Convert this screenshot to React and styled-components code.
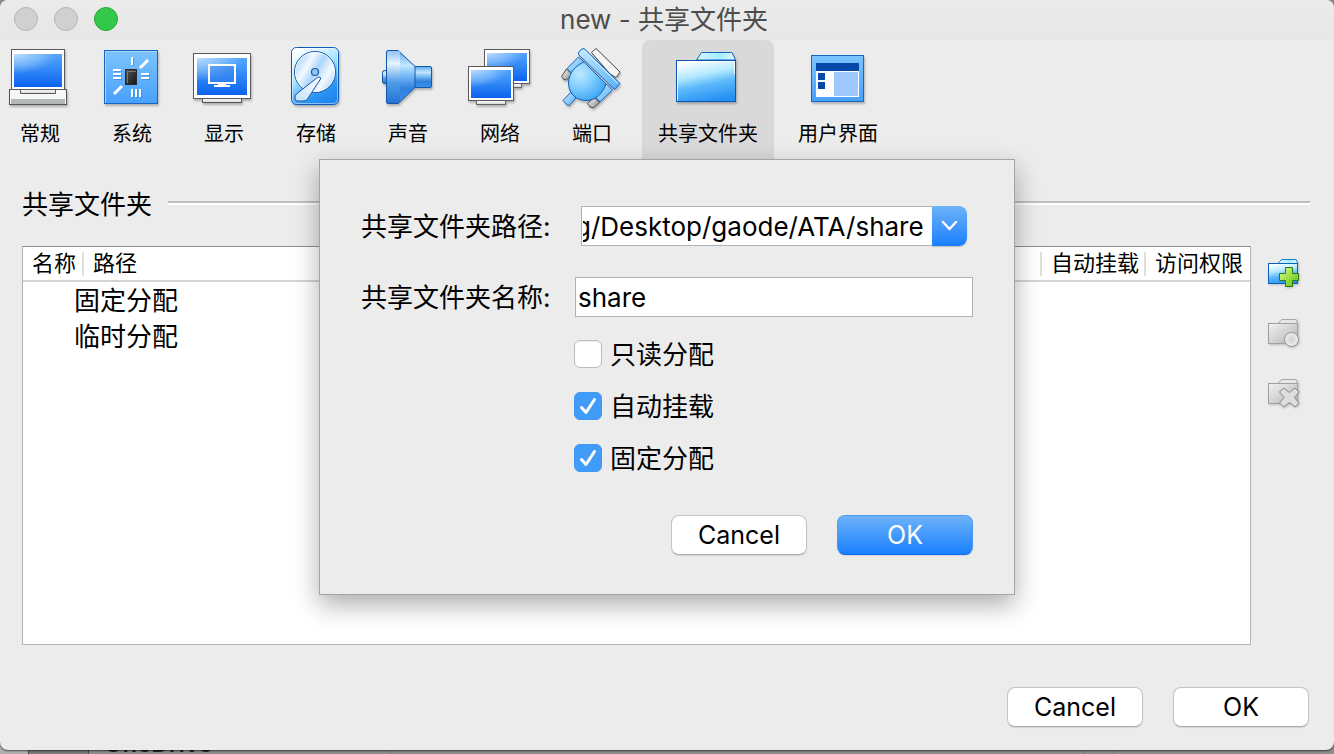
import React, { useEffect, useRef, useState } from "react";
import styled, { createGlobalStyle, css } from "styled-components";

const GlobalStyle = createGlobalStyle`
  *, *::before, *::after { box-sizing: border-box; }
  body {
    margin: 0;
    background: #8d8b8b;
    color: #000;
    font-family: Inter, "Noto Sans CJK SC", sans-serif;
  }
  button, input { font-family: inherit; color: inherit; }
`;

/* ---------- shell ---------- */

const Desktop = styled.div`
  position: relative;
  display: flex;
  flex-direction: column;
  min-height: 100vh;
  padding-bottom: 4px;
  overflow: hidden;
`;

const BackWindow = styled.div`
  position: absolute;
  left: 0;
  right: 0;
  bottom: 0;
  height: 24px;
  display: grid;
  grid-template-columns: 29px 60px 302px 694px 29px 1fr;
  background: #8f8d8d;
`;

const BackCell = styled.div`
  padding-left: 15px;
  border-right: 1px solid ${(p) => (p.$edge ? "#4b4949" : "#7e7c7c")};
  background: ${(p) => p.$fill || "transparent"};
  color: #222;
  font-size: 24px;
  font-weight: 600;
  line-height: 28px;
`;

const Window = styled.main`
  position: relative;
  flex: 1;
  display: flex;
  flex-direction: column;
  background: #ececec;
  border-radius: 8px;
  box-shadow: 0 1px 2px rgba(0, 0, 0, 0.6);
`;

const TitleBar = styled.header`
  display: grid;
  grid-template-columns: 1fr auto 1fr;
  align-items: center;
  height: 40px;
  padding: 0 20px 4px 14px;
  background: linear-gradient(#ebebeb, #e7e7e7);
  border-radius: 8px 8px 0 0;
`;

const Lights = styled.div`
  display: flex;
  gap: 16px;
`;

const Light = styled.button`
  width: 24px;
  height: 24px;
  padding: 0;
  border: 1px solid ${(p) => (p.$on ? "#2aa836" : "#b5b5b5")};
  border-radius: 50%;
  background: ${(p) => (p.$on ? "#34c84a" : "#d0d0d0")};
`;

const Title = styled.h1`
  margin: 0;
  padding-top: 2px;
  font-size: 26px;
  line-height: 36px;
  font-weight: 400;
  color: #4d4d4d;
`;

/* ---------- toolbar ---------- */

const Toolbar = styled.nav`
  display: flex;
  gap: 8px;
  margin-left: -2px;
`;

const Tab = styled.button`
  display: flex;
  flex-direction: column;
  align-items: center;
  gap: 14px;
  min-width: 84px;
  padding: 4px 16px 13px;
  border: 0;
  border-radius: 8px 8px 0 0;
  background: ${(p) => (p.$active ? "#d9d9d9" : "transparent")};
  font-size: 20px;
  line-height: 24px;
  white-space: nowrap;

  svg {
    display: block;
    overflow: visible;
    margin: 0 -8px;
    filter: drop-shadow(1px 2px 1px rgba(0, 0, 0, 0.25));
  }
`;

/* ---------- content ---------- */

const Content = styled.section`
  flex: 1;
  display: flex;
  flex-direction: column;
  gap: 25px;
  padding: 30px 24px 0 22px;
`;

const SectionHead = styled.div`
  display: flex;
  align-items: center;
  gap: 16px;
`;

const SectionTitle = styled.h2`
  margin: 0;
  font-size: 26px;
  line-height: 32px;
  font-weight: 400;
`;

const Rule = styled.hr`
  flex: 1;
  height: 4px;
  margin: 0 0 4px;
  border: 0;
  border-top: 2px solid #bfbfbf;
  background: #fff;
`;

const Body = styled.div`
  flex: 1;
  display: flex;
  gap: 16px;
`;

const ListBox = styled.div`
  flex: 1;
  background: #fff;
  border: 1px solid #b4b4b4;
  border-top-color: #8e8e8e;
`;

const FolderTable = styled.table`
  width: 100%;
  border-collapse: separate;
  border-spacing: 0;
  table-layout: fixed;
`;

const HeadCell = styled.th`
  position: relative;
  width: ${(p) => p.$width || "auto"};
  height: 35px;
  padding: 0 0 2px 9px;
  border-bottom: 2px solid #d4d4d4;
  font-size: 22px;
  line-height: 30px;
  font-weight: 400;
  text-align: left;
  white-space: nowrap;

  &:not(:last-child)::after {
    content: "";
    position: absolute;
    top: 5px;
    right: 0;
    width: 2px;
    height: 24px;
    background: #dedede;
  }
`;

const GroupCell = styled.td`
  height: 36px;
  padding: 2px 0 0 51px;
  font-size: 26px;
  line-height: 34px;
`;

const SideBar = styled.div`
  display: flex;
  flex-direction: column;
  gap: 28px;
  width: 43px;
  padding-top: 11px;
`;

const IconButton = styled.button`
  height: 32px;
  padding: 0;
  border: 0;
  background: none;
  text-align: left;

  svg {
    display: block;
    overflow: visible;
    filter: drop-shadow(1px 1px 1px rgba(0, 0, 0, 0.2));
  }
`;

const Actions = styled.div`
  display: flex;
  justify-content: flex-end;
  gap: 30px;
`;

const Footer = styled.footer`
  padding: 42px 25px 23px;
`;

const PushButton = styled.button`
  width: 136px;
  height: 40px;
  padding: 0;
  border: 1px solid #c4c4c4;
  border-bottom-color: #adadad;
  border-radius: 8px;
  background: #fff;
  box-shadow: 0 1px 1px rgba(0, 0, 0, 0.1);
  font-size: 25px;
  line-height: 36px;

  ${(p) =>
    p.$primary &&
    css`
      color: #fff;
      border-color: #4a9cf0;
      border-bottom-color: #0f6cf0;
      background: linear-gradient(#6db3f8, #1a7fff);
    `}
`;

/* ---------- sheet ---------- */

const SheetLayer = styled.div`
  position: absolute;
  inset: 0;
  display: flex;
  justify-content: center;
  align-items: flex-start;
  padding: 159px 16px 0;
`;

const Sheet = styled.form`
  width: 696px;
  max-width: 100%;
  padding: 46px 41px 39px;
  border: 1px solid #a4a4a4;
  background: #ececec;
  box-shadow: 0 10px 24px rgba(0, 0, 0, 0.32);
`;

const Fields = styled.div`
  display: grid;
  grid-template-columns: 190px 1fr;
  column-gap: 24px;
  row-gap: 31px;
  align-items: center;
`;

const FieldLabel = styled.label`
  padding-top: 2px;
  font-size: 26px;
  line-height: 38px;
  white-space: nowrap;
`;

const Combo = styled.div`
  display: flex;
  height: 40px;
  margin: 0 6px;
`;

const TextInput = styled.input`
  flex: 1;
  min-width: 0;
  width: 100%;
  height: 40px;
  padding: 0 2px;
  border: 1px solid #b2b2b2;
  border-radius: 0;
  outline: 0;
  background: #fff;
  font-size: 26px;
`;

const ComboInput = styled(TextInput)`
  padding: 0 8px 0 1px;
  border-right: 0;
`;

const ComboButton = styled.button`
  display: grid;
  place-items: center;
  width: 35px;
  padding: 0;
  border: 0;
  border-radius: 0 8px 8px 0;
  background: linear-gradient(#6db3f8, #1a7fff);
  box-shadow: 0 1px 1px rgba(0, 0, 0, 0.2);
`;

const Checks = styled.div`
  display: flex;
  flex-direction: column;
  gap: 24px;
  padding: 23px 0 43px 213px;
`;

const CheckLabel = styled.label`
  display: flex;
  align-items: center;
  gap: 8px;
  height: 28px;
  font-size: 26px;
  line-height: 28px;
`;

const CheckText = styled.span`
  padding-top: 2px;
`;

const CheckBox = styled.input`
  appearance: none;
  width: 28px;
  height: 28px;
  margin: 0;
  border: 1px solid #bcbcbc;
  border-radius: 6px;
  background: #fff;
  box-shadow: inset 0 1px 1px rgba(0, 0, 0, 0.08);

  &:checked {
    border-color: #3f97f6;
    background: #419bf9;
    box-shadow: none;
  }
`;

const CheckHolder = styled.span`
  display: grid;

  > * { grid-area: 1 / 1; }
  svg { pointer-events: none; }
`;

/* ---------- drawings ---------- */

const Art = ({ children }) => (
  <svg width="64" height="64" viewBox="0 0 64 64" aria-hidden="true">
    {children}
  </svg>
);

const HiddenSvg = styled.svg`
  position: absolute;
`;

const Defs = () => (
  <HiddenSvg width="0" height="0" aria-hidden="true">
    <defs>
      <linearGradient id="screen" x1="0" y1="0" x2="0" y2="1">
        <stop offset="0" stopColor="#55a6fb" />
        <stop offset="0.5" stopColor="#2f86f6" />
        <stop offset="1" stopColor="#0b62ee" />
      </linearGradient>
      <radialGradient id="gloss" cx="0.05" cy="0" r="0.85">
        <stop offset="0" stopColor="#fff" stopOpacity="0.6" />
        <stop offset="0.6" stopColor="#d9efff" stopOpacity="0.32" />
        <stop offset="1" stopColor="#bfe3ff" stopOpacity="0" />
      </radialGradient>
      <linearGradient id="tile" x1="0" y1="0" x2="0" y2="1">
        <stop offset="0" stopColor="#7dc4ff" />
        <stop offset="1" stopColor="#47a0fc" />
      </linearGradient>
      <linearGradient id="metal" x1="0" y1="0" x2="0" y2="1">
        <stop offset="0" stopColor="#fff" />
        <stop offset="1" stopColor="#d2d4d4" />
      </linearGradient>
      <linearGradient id="grip" x1="0" y1="0" x2="1" y2="1">
        <stop offset="0" stopColor="#f4f4f4" />
        <stop offset="1" stopColor="#8e8e8e" />
      </linearGradient>
      <linearGradient id="chip" x1="0" y1="0" x2="1" y2="1">
        <stop offset="0" stopColor="#555" />
        <stop offset="1" stopColor="#161616" />
      </linearGradient>
      <linearGradient id="drive" x1="0.2" y1="0" x2="0.7" y2="1">
        <stop offset="0" stopColor="#fff" />
        <stop offset="0.45" stopColor="#a5e4ff" />
        <stop offset="0.8" stopColor="#2b94f3" />
        <stop offset="1" stopColor="#1f86ee" />
      </linearGradient>
      <linearGradient id="disc" x1="0" y1="0.2" x2="1" y2="0.8">
        <stop offset="0" stopColor="#9fd0fb" />
        <stop offset="0.3" stopColor="#f2f9ff" />
        <stop offset="0.5" stopColor="#a9d5fc" />
        <stop offset="0.75" stopColor="#f4faff" />
        <stop offset="1" stopColor="#a4cffb" />
      </linearGradient>
      <linearGradient id="arm" x1="1" y1="0" x2="0" y2="1">
        <stop offset="0" stopColor="#fff" />
        <stop offset="1" stopColor="#c3dffb" />
      </linearGradient>
      <linearGradient id="cone" x1="0" y1="0" x2="0" y2="1">
        <stop offset="0" stopColor="#5aa9ee" />
        <stop offset="0.28" stopColor="#c4e7ff" />
        <stop offset="0.45" stopColor="#7fc0f7" />
        <stop offset="0.72" stopColor="#2f80dd" />
        <stop offset="1" stopColor="#3d93ee" />
      </linearGradient>
      <linearGradient id="plate" x1="0" y1="0" x2="0" y2="1">
        <stop offset="0" stopColor="#8cc2f5" />
        <stop offset="0.25" stopColor="#e6f4ff" />
        <stop offset="0.6" stopColor="#4f9ce8" />
        <stop offset="1" stopColor="#2673d2" />
      </linearGradient>
      <radialGradient id="plug" cx="0.3" cy="0.3" r="0.8">
        <stop offset="0" stopColor="#bfe8ff" />
        <stop offset="0.5" stopColor="#7ccbff" />
        <stop offset="1" stopColor="#36a1f5" />
      </radialGradient>
      <linearGradient id="pipe" x1="0" y1="0" x2="1" y2="1">
        <stop offset="0" stopColor="#c5e9ff" />
        <stop offset="1" stopColor="#55b1f8" />
      </linearGradient>
      <linearGradient id="folder" x1="0.3" y1="0" x2="0.6" y2="1">
        <stop offset="0" stopColor="#fff" />
        <stop offset="0.35" stopColor="#b5e9ff" />
        <stop offset="0.6" stopColor="#5cb9fb" />
        <stop offset="1" stopColor="#2590f3" />
      </linearGradient>
      <linearGradient id="flap" x1="0" y1="0" x2="1" y2="0">
        <stop offset="0" stopColor="#d9f7ff" />
        <stop offset="0.6" stopColor="#a4ecff" />
        <stop offset="1" stopColor="#e6fbff" />
      </linearGradient>
      <linearGradient id="grayFolder" x1="0" y1="0" x2="1" y2="1">
        <stop offset="0" stopColor="#f2f2f2" />
        <stop offset="1" stopColor="#b4b4b4" />
      </linearGradient>
      <linearGradient id="green" x1="0" y1="0" x2="1" y2="1">
        <stop offset="0" stopColor="#e0fb9c" />
        <stop offset="0.5" stopColor="#9bdf45" />
        <stop offset="1" stopColor="#5fb81c" />
      </linearGradient>
      <radialGradient id="knob">
        <stop offset="0" stopColor="#cfcfcf" />
        <stop offset="1" stopColor="#f0f0f0" />
      </radialGradient>
    </defs>
  </HiddenSvg>
);

const Monitor = ({ x, y, w, h, inset, top }) => (
  <g>
    <rect x={x + 0.5} y={y + 0.5} width={w - 1} height={h - 1} fill="#fff" stroke="#5a5a5a" />
    <rect x={x + inset} y={y + top} width={w - inset * 2} height={h - inset - top} fill="url(#screen)" />
    <path
      d={`M${x + inset} ${y + top}H${x + w - inset}Q${x + w * 0.8} ${y + h * 0.45} ${x + w * 0.5} ${y + h * 0.5}T${x + inset} ${y + h * 0.7}Z`}
      fill="url(#gloss)"
    />
  </g>
);

const GeneralIcon = () => (
  <Art>
    <rect x="1.5" y="45.5" width="57" height="15" fill="#f7f7f7" stroke="#555" />
    <rect x="3" y="55" width="54" height="5" fill="#b5b9b8" />
    <Monitor x={3} y={5} w={54} h={41} inset={3} top={5} />
    <path d="M12.5 45.5H47.5V49.5H12.5Z" fill="url(#metal)" stroke="#5a5a5a" />
  </Art>
);

const SystemIcon = () => (
  <Art>
    <rect x="4.5" y="6.5" width="53" height="53" fill="url(#tile)" stroke="#1a66bd" />
    <path d="M5.5 59V7.5H57" fill="none" stroke="#a5d8ff" />
    <g stroke="#2c75cf" strokeWidth="2" opacity="0.5" transform="translate(1 1)">
      <path d="M13 26h8M13 30h8M13 34h8M41 30h8M41 34h8M32 13v8M32 45v8M36 45v8M40 45v8" />
    </g>
    <path d="M13 26h8M13 30h8M13 34h8M41 30h8M41 34h8M32 13v8M32 45v8M36 45v8M40 45v8" stroke="#fff" strokeWidth="2" />
    <path d="M40 24l8-8M14 50l8-8" stroke="#fff" strokeWidth="3" />
    <rect x="25.5" y="25.5" width="11" height="15" fill="url(#chip)" stroke="#2a2a2a" />
    <path d="M27.5 39V27.5H36" fill="none" stroke="#777" />
  </Art>
);

const DisplayIcon = () => (
  <Art>
    <rect x="10.5" y="54.5" width="39" height="4" fill="url(#metal)" stroke="#555" />
    <Monitor x={1} y={9} w={58} h={46} inset={4} top={5} />
    <rect x="17" y="21" width="26" height="18" fill="#3a86ee" fillOpacity="0.5" stroke="#fff" strokeWidth="2" />
    <path d="M26 40h8v1h4v2H22v-2h4z" fill="#fff" />
  </Art>
);

const StorageIcon = () => (
  <Art>
    <rect x="7.5" y="3.5" width="47" height="57" rx="5" fill="url(#drive)" stroke="#0b59b5" />
    <rect x="8.5" y="4.5" width="45" height="55" rx="4" fill="none" stroke="#fff" opacity="0.45" />
    <circle cx="31" cy="28" r="20.5" fill="url(#disc)" stroke="#1a56ad" />
    <circle cx="31" cy="28" r="19.5" fill="none" stroke="#fff" opacity="0.8" />
    <circle cx="31" cy="28" r="3.5" fill="#8fc6f2" stroke="#15559f" strokeWidth="1.2" />
    <path d="M33.5 33.5Q37 32 36.5 35L23.5 55Q22 57 19 57H13Q11 56.5 11 53.5Q11 51 13 49.5Z" fill="url(#arm)" stroke="#1c55a8" />
  </Art>
);

const SoundIcon = () => (
  <Art>
    <rect x="6.5" y="26.5" width="6" height="13" rx="2" fill="url(#plate)" stroke="#1458ab" />
    <path d="M38 22.5H54Q55.5 22.5 55.5 24V42Q55.5 43.5 54 43.5H38Z" fill="url(#cone)" stroke="#1458ab" />
    <path d="M22 6.5L39 22.5V43.5L22 59.5Z" fill="url(#cone)" stroke="#1458ab" />
    <path d="M12 6.5H22Q24 6.5 24 9V57Q24 59.5 22 59.5H12Q10.5 59.5 10.5 58V8Q10.5 6.5 12 6.5Z" fill="url(#plate)" />
    <path d="M22 6.5H12Q10.5 6.5 10.5 8V58Q10.5 59.5 12 59.5H22" fill="none" stroke="#1458ab" />
  </Art>
);

const NetworkIcon = () => (
  <Art>
    <rect x="34.5" y="39.5" width="19" height="4" fill="url(#metal)" stroke="#666" />
    <Monitor x={16} y={5} w={46} h={35} inset={3} top={4} />
    <rect x="8.5" y="56.5" width="29" height="4" fill="url(#metal)" stroke="#666" />
    <Monitor x={0} y={22} w={46} h={35} inset={3} top={4} />
  </Art>
);

const PortIcon = () => (
  <Art>
    <g strokeLinejoin="round">
      <path d="M31.5 8.5L36 4.5L60 28L56 33.5L50 30Z" fill="#f6f6f6" stroke="#4c4c4c" />
      <path d="M6.5 25L12 30.5L6.5 36Q3 36 1.5 32.5Z" fill="url(#grip)" stroke="#4c4c4c" />
      <path d="M34 53.5L39.5 58.5L33 64Q29 63 27.5 59.5Z" fill="url(#grip)" stroke="#4c4c4c" />
      <path d="M18.5 13L24.5 18.5L12.5 30L7 24.5Z" fill="url(#pipe)" stroke="#1760b4" />
      <path d="M46.5 40L52.5 46L40 58L35 52.5Z" fill="url(#pipe)" stroke="#1760b4" />
      <path d="M10.5 48.5L16 54L8.5 62L3 56.5Z" fill="url(#pipe)" stroke="#1760b4" />
      <path d="M24 18C16 21 8.5 29 8.5 39C8.5 49 16 56.5 26 56.5C36 56.5 43 49 46 40Z" fill="url(#plug)" stroke="#1760b4" />
      <path d="M24 4.5L60 39.5L54.5 45.5L18.5 10.5Q18 8 20 6.5Q22 4.500 24 4.5Z" fill="url(#pipe)" stroke="#1760b4" />
      <path d="M24 6.500L58 39.5" stroke="#e4f6ff" />
    </g>
  </Art>
);

const SharedFolderIcon = () => (
  <Art>
    <path d="M20.5 16L25.5 8.5H56L59.5 16Z" fill="url(#flap)" stroke="#1667bd" />
    <rect x="0.5" y="16.5" width="59" height="41" fill="url(#folder)" stroke="#0d55b0" />
    <path d="M1.5 57V17.5H58.5V30" fill="none" stroke="#fff" opacity="0.8" />
  </Art>
);

const InterfaceIcon = () => (
  <Art>
    <rect x="5.5" y="11.5" width="52" height="46" fill="url(#tile)" stroke="#1667bd" />
    <rect x="10" y="27" width="43" height="26" fill="#fff" />
    <rect x="10" y="19" width="43" height="8" fill="#0648a8" />
    <rect x="28" y="28" width="24" height="24" fill="#9cc8ff" />
    <rect x="12" y="29" width="7" height="7" fill="#0648a8" />
    <rect x="12" y="38" width="7" height="7" fill="#0648a8" />
  </Art>
);

const SmallFolder = ({ live, children }) => (
  <svg width="34" height="32" viewBox="0 0 34 32" aria-hidden="true">
    <path d="M11.5 6L14.5 2.5H29L30.5 6V8H11.5Z" fill={live ? "url(#flap)" : "#e6e6e6"} stroke={live ? "#1c7fd0" : "#a9a9a9"} />
    <rect x="1.5" y="6.5" width="29" height="20" fill={live ? "url(#folder)" : "url(#grayFolder)"} stroke={live ? "#0d5fbc" : "#a0a0a0"} />
    {children}
  </svg>
);

const PlusMark = () => (
  <path d="M18.5 10.5H25.5V16.5H31.5V23.5H25.5V29.5H18.5V23.5H12.5V16.5H18.5Z" fill="url(#green)" stroke="#2c7a10" />
);

const KnobMark = () => <circle cx="24.5" cy="22.5" r="7" fill="url(#knob)" stroke="#8f8f8f" />;

const CrossMark = () => (
  <path
    d="M16.5 11L22.5 15.5L28 11L32 15L27.5 20.5L32 26L28 30L22.5 25.5L16.5 30L12.5 26L17 20.5L12.5 15Z"
    fill="#dedede"
    stroke="#858585"
    strokeLinejoin="round"
  />
);

const Chevron = () => (
  <svg width="17" height="12" viewBox="0 0 17 12" aria-hidden="true">
    <path d="M2 2l6.500 7L15 2" fill="none" stroke="#fff" strokeWidth="2.5" strokeLinecap="round" strokeLinejoin="round" />
  </svg>
);

const Tick = () => (
  <svg width="28" height="28" viewBox="0 0 28 28" aria-hidden="true">
    <path d="M7.5 15.5L12 20.5L20.5 7.5" fill="none" stroke="#fff" strokeWidth="3" strokeLinecap="round" strokeLinejoin="round" />
  </svg>
);

/* ---------- page ---------- */

const TABS = [
  ["常规", GeneralIcon],
  ["系统", SystemIcon],
  ["显示", DisplayIcon],
  ["存储", StorageIcon],
  ["声音", SoundIcon],
  ["网络", NetworkIcon],
  ["端口", PortIcon],
  ["共享文件夹", SharedFolderIcon],
  ["用户界面", InterfaceIcon],
];

function Check({ label, initial }) {
  const [on, setOn] = useState(initial);
  return (
    <CheckLabel>
      <CheckHolder>
        <CheckBox type="checkbox" checked={on} onChange={() => setOn(!on)} />
        {on && <Tick />}
      </CheckHolder>
      <CheckText>{label}</CheckText>
    </CheckLabel>
  );
}

function ShareSheet() {
  const path = useRef(null);
  useEffect(() => {
    path.current.scrollLeft = path.current.scrollWidth;
  }, []);
  return (
    <SheetLayer>
      <Sheet onSubmit={(e) => e.preventDefault()}>
        <Fields>
          <FieldLabel htmlFor="share-path">共享文件夹路径:</FieldLabel>
          <Combo>
            <ComboInput id="share-path" ref={path} defaultValue="g/Desktop/gaode/ATA/share" />
            <ComboButton type="button" aria-label="路径">
              <Chevron />
            </ComboButton>
          </Combo>
          <FieldLabel htmlFor="share-name">共享文件夹名称:</FieldLabel>
          <TextInput id="share-name" defaultValue="share" />
        </Fields>
        <Checks>
          <Check label="只读分配" initial={false} />
          <Check label="自动挂载" initial />
          <Check label="固定分配" initial />
        </Checks>
        <Actions>
          <PushButton type="button">Cancel</PushButton>
          <PushButton type="submit" $primary>OK</PushButton>
        </Actions>
      </Sheet>
    </SheetLayer>
  );
}

export default function App() {
  return (
    <Desktop>
      <GlobalStyle />
      <Defs />
      <BackWindow aria-hidden="true">
        <BackCell $edge $fill="#b2b1b1" />
        <BackCell $edge $fill="#7b7979" />
        <BackCell>OneDrive</BackCell>
        <BackCell />
        <BackCell />
      </BackWindow>
      <Window>
        <TitleBar>
          <Lights>
            <Light aria-label="关闭" />
            <Light aria-label="最小化" />
            <Light aria-label="缩放" $on />
          </Lights>
          <Title>new - 共享文件夹</Title>
        </TitleBar>
        <Toolbar>
          {TABS.map(([label, Icon]) => (
            <Tab key={label} type="button" $active={label === "共享文件夹"}>
              <Icon />
              {label}
            </Tab>
          ))}
        </Toolbar>
        <Content>
          <SectionHead>
            <SectionTitle>共享文件夹</SectionTitle>
            <Rule />
          </SectionHead>
          <Body>
            <ListBox>
              <FolderTable>
                <thead>
                  <tr>
                    <HeadCell $width="61px">名称</HeadCell>
                    <HeadCell>路径</HeadCell>
                    <HeadCell $width="104px">自动挂载</HeadCell>
                    <HeadCell $width="104px">访问权限</HeadCell>
                  </tr>
                </thead>
                <tbody>
                  <tr><GroupCell colSpan={4}>固定分配</GroupCell></tr>
                  <tr><GroupCell colSpan={4}>临时分配</GroupCell></tr>
                </tbody>
              </FolderTable>
            </ListBox>
            <SideBar>
              <IconButton type="button" aria-label="添加">
                <SmallFolder live><PlusMark /></SmallFolder>
              </IconButton>
              <IconButton type="button" aria-label="编辑">
                <SmallFolder><KnobMark /></SmallFolder>
              </IconButton>
              <IconButton type="button" aria-label="删除">
                <SmallFolder><CrossMark /></SmallFolder>
              </IconButton>
            </SideBar>
          </Body>
        </Content>
        <Footer>
          <Actions>
            <PushButton type="button">Cancel</PushButton>
            <PushButton type="button">OK</PushButton>
          </Actions>
        </Footer>
        <ShareSheet />
      </Window>
    </Desktop>
  );
}
